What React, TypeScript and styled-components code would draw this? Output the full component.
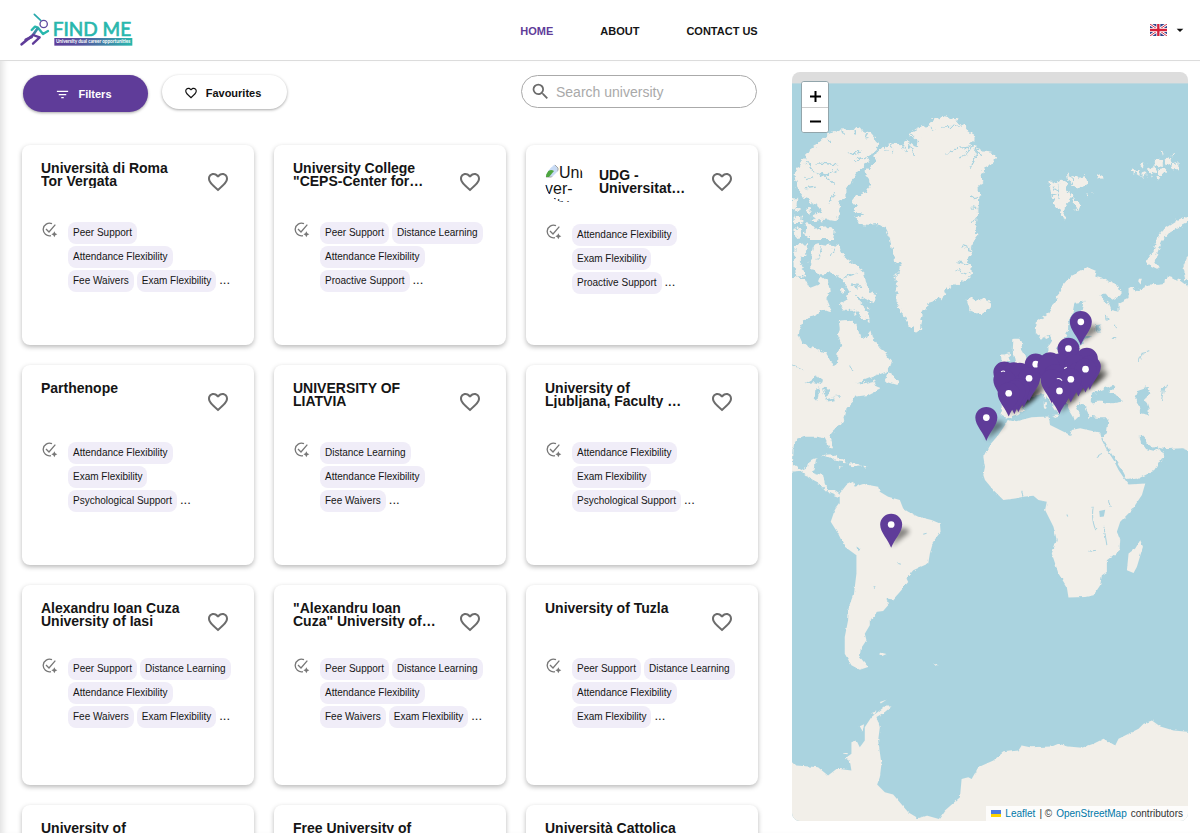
import React from 'react';
import styled, { createGlobalStyle } from 'styled-components';
import { MdFavoriteBorder, MdFilterList, MdSearch, MdArrowDropDown } from 'react-icons/md';

const purple = '#5f3c99';

const GlobalStyle = createGlobalStyle`
  * { box-sizing: border-box; }
  body {
    margin: 0;
    background: #fff;
    color: #151515;
    font-family: "Liberation Sans", Arial, sans-serif;
  }
  button, input { font-family: inherit; }
`;

const Page = styled.div`
  display: flex;
  flex-direction: column;
  height: 100vh;
`;

const Header = styled.header`
  display: grid;
  grid-template-columns: 1fr auto 1fr;
  align-items: center;
  height: 61px;
  flex-shrink: 0;
  padding: 0 12px 0 20px;
  border-bottom: 1px solid #dcdcdc;
`;

const LogoLink = styled.a`
  display: flex;
  width: 114px;
`;

const Nav = styled.nav`
  display: flex;
  gap: 47px;
  padding: 2px 0 0 70px;
`;

const NavLink = styled.a<{ $active?: boolean }>`
  font-size: 11px;
  font-weight: 700;
  line-height: 16px;
  text-decoration: none;
  color: ${(p) => (p.$active ? purple : '#151515')};
`;

const LanguageButton = styled.button`
  display: flex;
  align-items: center;
  justify-self: end;
  gap: 5px;
  padding: 0;
  border: 0;
  background: none;
  color: #111;
`;

const Main = styled.main`
  display: grid;
  grid-template-columns: minmax(0, 31fr) minmax(0, 17fr);
  flex: 1;
  min-height: 0;
  box-shadow: inset 7px 0 6px -4px rgba(0, 0, 0, 0.12);
`;

const Listing = styled.section`
  min-height: 0;
  overflow-y: auto;
  scrollbar-width: none;
  padding: 14px 17px 20px 22px;
`;

const Toolbar = styled.div`
  display: flex;
  align-items: flex-start;
  gap: 14px;
  height: 70px;
  padding: 0 1px;
`;

const PillButton = styled.button<{ $primary?: boolean }>`
  display: flex;
  align-items: center;
  justify-content: center;
  gap: 8px;
  width: 125px;
  height: ${(p) => (p.$primary ? 37 : 34)}px;
  padding: 1px 4px 0 0;
  border: 0;
  border-radius: 19px;
  font-size: 11px;
  font-weight: 700;
  color: ${(p) => (p.$primary ? '#fff' : '#111')};
  background: ${(p) => (p.$primary ? purple : '#fff')};
  box-shadow: 0 1px 3px rgba(0, 0, 0, 0.35);
`;

const SearchField = styled.label`
  display: flex;
  align-items: center;
  gap: 5px;
  width: 236px;
  height: 33px;
  margin-left: auto;
  padding: 0 8px;
  border: 1px solid #aaa;
  border-radius: 17px;
  color: #6b6b6b;
  svg { flex-shrink: 0; }
`;

const SearchInput = styled.input`
  flex: 1;
  min-width: 0;
  padding: 0;
  border: 0;
  outline: 0;
  background: none;
  font-size: 14px;
  color: #222;
  &::placeholder { color: #a9a9a9; opacity: 1; }
`;

const CardGrid = styled.div`
  display: grid;
  grid-template-columns: repeat(3, minmax(0, 1fr));
  gap: 20px;
`;

const Card = styled.article`
  height: 200px;
  padding: 17px 19px;
  border-radius: 8px;
  background: #fff;
  box-shadow: 0 2px 5px rgba(0, 0, 0, 0.28);
`;

const CardHead = styled.div<{ $centered?: boolean }>`
  display: flex;
  align-items: ${(p) => (p.$centered ? 'center' : 'flex-start')};
  height: 40px;
`;

const CardTitle = styled.h2`
  flex: 1;
  height: 26px;
  margin: 0;
  overflow: hidden;
  font-size: 14px;
  font-weight: 700;
  line-height: 13px;
  white-space: pre;
`;

const MissingImage = styled.span`
  flex-shrink: 0;
  width: 40px;
  height: 40px;
  margin-right: 14px;
  padding-top: 1px;
  overflow: hidden;
  border-radius: 50%;
  font-size: 16px;
  line-height: 16px;
  white-space: pre;
`;

const HeartButton = styled.button`
  display: flex;
  align-self: center;
  flex-shrink: 0;
  margin-right: 5px;
  padding: 0;
  border: 0;
  background: none;
  color: #6c6c6c;
`;

const Supports = styled.div<{ $gap: number }>`
  display: flex;
  gap: 10px;
  margin-top: ${(p) => p.$gap}px;
  svg { flex-shrink: 0; }
`;

const Chips = styled.ul`
  display: flex;
  flex-wrap: wrap;
  gap: 2px 3px;
  margin: 0;
  padding: 0;
  list-style: none;
`;

const Chip = styled.li`
  height: 22px;
  padding: 0 5px;
  border-radius: 8px;
  background: #f0edf8;
  font-size: 10px;
  line-height: 21px;
  white-space: nowrap;
`;

const More = styled.li`
  font-size: 13px;
  line-height: 20px;
`;

const MapColumn = styled.aside`
  min-height: 0;
  padding: 11px 12px 12px 17px;
`;

const MapFrame = styled.div`
  position: relative;
  height: 100%;
  overflow: hidden;
  border-radius: 8px;
  background: #ddd;
`;

const MapCanvas = styled.svg`
  display: block;
  width: 100%;
  height: 100%;
`;

const ZoomControl = styled.div`
  position: absolute;
  top: 9px;
  left: 9px;
  display: flex;
  flex-direction: column;
  border: 1px solid #92a5ab;
  border-radius: 3px;
  background: #fff;
  overflow: hidden;
`;

const ZoomButton = styled.button`
  display: flex;
  align-items: center;
  justify-content: center;
  width: 26px;
  height: 25px;
  padding: 3px 0 0;
  border: 0;
  background: #fff;
  & + & { border-top: 1px solid #ccc; }
`;

const Attribution = styled.div`
  position: absolute;
  right: 0;
  bottom: 0;
  display: flex;
  align-items: center;
  gap: 4px;
  height: 15px;
  padding: 0 5px;
  background: rgba(255, 255, 255, 0.8);
  font-size: 10px;
  color: #333;
  a { color: #0078a8; text-decoration: none; }
`;

const Logo = () => (
  <svg width="114" height="34" viewBox="59 40 342 102" role="img" aria-label="Find Me">
    <defs>
      <linearGradient id="bar" x1="0" x2="1">
        <stop offset="0" stopColor="#5f3c99" />
        <stop offset="0.35" stopColor="#55559f" />
        <stop offset="1" stopColor="#28b7ad" />
      </linearGradient>
      <linearGradient id="body" gradientUnits="userSpaceOnUse" x1="108" y1="75" x2="92" y2="122">
        <stop offset="0" stopColor="#28b7ad" />
        <stop offset="1" stopColor="#5f3c99" />
      </linearGradient>
    </defs>
    <g fill="none" strokeLinecap="round" strokeLinejoin="round">
      <path d="M102 44 L121 62" stroke="#28a9ac" strokeWidth="5" />
      <circle cx="130" cy="73" r="11" stroke="#5f4ba0" strokeWidth="4" />
      <path d="M94 91 L104 81 L113 84 L128 103 L143 94" stroke="#28b7ad" strokeWidth="7" />
      <path d="M112 86 L98 106 L64 134" stroke="url(#body)" strokeWidth="8" />
      <path d="M98 106 L118 113 L98 132" stroke="#5f3c99" strokeWidth="7" />
      <path d="M76 120 L94 112" stroke="#5f3c99" strokeWidth="8" />
    </g>
    <text x="157" y="109" fontFamily="Lato, sans-serif" fontSize="57" fill="#28b7ad" stroke="#28b7ad" strokeWidth="2">FIND ME</text>
    <rect x="162" y="115" width="234" height="23" fill="url(#bar)" />
    <text x="167" y="131" fontFamily="Lato, sans-serif" fontSize="14" fontWeight="700" fill="#fff">
      University dual career opportunities
    </text>
  </svg>
);

const UkFlag = () => (
  <svg width="17" height="12" viewBox="0 0 51 36" aria-hidden="true">
    <rect width="51" height="36" fill="#34458c" />
    <path d="M0 0 L51 36 M51 0 L0 36" stroke="#fff" strokeWidth="8" />
    <path d="M0 0 L51 36 M51 0 L0 36" stroke="#d3344b" strokeWidth="3" />
    <path d="M25 0 V36 M0 18 H51" stroke="#fff" strokeWidth="12" />
    <path d="M25 0 V36 M0 18 H51" stroke="#d5203b" strokeWidth="7" />
  </svg>
);

const TaskIcon = () => (
  <svg width="17" height="17" viewBox="0 0 51 51" fill="none" stroke="#777" strokeWidth="4" aria-hidden="true">
    <path d="M33 5 A19 19 0 1 0 30 41" />
    <path d="M15 21 L24 30 L43 8" />
    <path d="M40 28 L43 34 L49 37 L43 40 L40 46 L37 40 L31 37 L37 34 Z" fill="#777" stroke="none" />
  </svg>
);

const BrokenImageIcon = () => (
  <svg width="14" height="15" viewBox="0 0 14 15" aria-hidden="true">
    <path d="M1 1 H9 L13 5 V14 H1 Z" fill="#c7daf4" stroke="#a5a5a5" />
    <path d="M1 14 V10 Q5 5 9 8 L4 14 Z" fill="#4ea63f" />
    <path d="M6 15 L14 7 V15 Z" fill="#fff" />
  </svg>
);

/* Map geometry is drawn at three units per pixel. */
const NORTH = [
  // Greenland
  'M275,262 L300,243 328,238 350,240 365,225 385,240 400,245 395,225 370,210 400,190 430,180 445,165 480,158 520,165 533,180 545,195 570,215 572,225 555,240 575,250 600,262 620,265 632,282 620,300 600,310 590,330 592,350 580,360 583,400 580,440 572,480 580,510 565,530 560,560 545,580 555,600 558,628 540,645 510,660 485,670 478,690 460,705 430,715 415,740 408,770 405,800 390,795 370,775 350,740 335,710 335,680 340,655 325,640 345,620 350,600 325,590 320,550 315,520 300,490 280,478 250,480 225,478 215,455 240,450 205,440 215,425 200,410 215,390 245,380 258,360 255,345 238,335 245,315 262,300 270,290Z',
  // Ellesmere and neighbouring islands
  'M65,265 L100,240 125,215 165,195 215,193 255,205 278,230 275,250 258,270 240,300 218,325 200,350 185,375 185,400 160,410 165,440 155,470 125,465 80,470 85,455 110,440 105,425 80,415 70,400 55,395 35,370 30,330 45,300 50,285 65,285Z',
  'M22,395 L40,410 38,425 22,430Z M30,432 L48,430 46,438 32,440Z M30,452 L50,455 50,475 30,475Z M66,430 L78,432 74,445 66,442Z M30,495 L48,490 50,515 32,518Z M65,475 L80,480 90,492 140,487 150,500 145,523 70,523 60,500Z',
  'M85,545 L110,540 165,548 170,565 185,580 235,620 240,650 255,680 277,690 270,715 250,710 235,700 215,690 225,710 250,735 258,768 240,765 220,750 200,735 180,735 165,715 190,700 195,680 165,640 135,620 115,632 90,620 75,600Z',
  'M30,540 L70,535 68,560 45,585 60,630 35,640 28,590Z M168,668 L180,668 182,682 170,684Z',
  'M545,705 L560,700 585,710 605,698 618,715 610,735 575,748 555,738 550,722Z',
  // Svalbard, Franz Josef Land
  'M793,350 L815,355 825,345 845,350 840,370 860,395 845,415 835,462 825,450 812,415 800,400Z M845,330 L870,340 900,335 907,355 880,375 850,350Z M865,395 L885,420 880,440 867,430Z M938,338 L950,332 955,340 942,344Z M900,392 L908,394 904,398Z M918,384 L928,386 922,391Z',
  'M1038,320 L1060,314 1060,334Z M1064,300 L1080,294 1076,312Z M1066,330 L1080,325 1080,344Z M1088,312 L1108,304 1112,325 1098,336Z M1102,290 L1125,282 1134,300 1112,308Z M1118,312 L1140,308 1138,330 1118,332Z M1138,285 L1155,276 1160,296 1144,302Z M1162,296 L1180,290 1178,314 1162,314Z M1126,262 L1136,264 1130,274Z M1156,268 L1170,268 1162,278Z M1110,335 L1125,334 1118,348Z',
];

const MIDDLE = [
  // North and Central America
  'M22,640 L60,640 75,670 100,660 110,635 130,650 135,680 125,700 140,735 135,745 110,735 95,750 70,755 55,770 45,790 42,810 55,838 90,850 120,862 135,885 147,908 157,895 158,865 170,840 160,815 165,790 162,768 195,765 215,780 225,815 245,820 260,800 265,820 285,850 300,862 320,890 315,910 300,922 260,938 215,955 240,955 268,948 275,965 290,970 250,990 215,995 205,1010 185,1030 180,1060 165,1080 140,1105 135,1120 145,1150 135,1150 120,1120 95,1115 60,1115 35,1125 24,1145 22,1195 50,1215 70,1205 75,1185 95,1180 90,1210 85,1220 115,1230 120,1255 130,1275 150,1275 165,1285 160,1295 135,1285 110,1260 90,1250 60,1230 45,1218 0,1222 0,640Z',
  'M312,918 L318,932 340,948 335,960 300,950 305,932Z',
  'M115,1170 L140,1168 165,1180 190,1192 165,1190 140,1180Z M193,1192 L220,1194 232,1204 200,1207Z M158,1202 L175,1205 165,1209Z M235,1202 L248,1204 240,1208Z',
  // Europe and western Asia
  'M905,607 L935,620 930,635 960,645 1000,665 1008,690 985,705 960,690 945,690 965,710 975,735 1000,740 1000,715 1030,700 1030,670 1045,665 1050,680 1090,660 1140,655 1145,635 1180,645 1208,665 1230,680 1230,1165 1190,1150 1150,1152 1120,1145 1138,1172 1110,1215 1060,1240 1025,1245 1015,1225 990,1185 960,1135 950,1115 965,1105 970,1060 945,1060 910,1055 905,1040 895,1020 885,1015 872,1025 885,1050 870,1065 855,1040 840,1010 830,1005 835,1025 820,1045 800,1015 780,985 760,990 730,995 715,1035 700,1050 670,1060 650,1055 650,1005 660,990 700,995 710,975 695,965 720,955 745,935 770,910 790,880 790,845 800,830 795,812 770,825 752,800 755,770 790,745 815,700 830,665 860,630Z',
  'M685,822 L702,822 714,835 707,850 722,875 727,900 700,912 690,890 683,860Z M648,870 L675,865 672,890 650,893Z M776,985 L784,985 782,1005 776,1000Z M776,1012 L786,1012 783,1032 776,1030Z M798,1050 L825,1048 820,1060Z',
  // Novaya Zemlya
  'M1205,455 L1180,465 1140,490 1115,520 1105,560 1090,580 1085,600 1115,615 1120,608 1108,590 1118,560 1130,530 1155,500 1205,475Z M1230,560 L1208,572 1192,610 1200,645 1230,660Z M1058,645 L1070,645 1066,656Z',
];

const SOUTH = [
  // South America
  'M165,1285 L185,1260 205,1250 210,1265 235,1257 280,1265 285,1280 310,1295 345,1305 355,1330 370,1340 400,1355 440,1365 465,1375 467,1400 445,1430 435,1465 430,1495 385,1515 365,1540 370,1550 345,1580 325,1603 305,1600 310,1620 295,1637 272,1640 270,1655 255,1663 255,1680 240,1705 245,1725 228,1750 225,1775 250,1805 225,1813 200,1800 180,1765 180,1715 190,1665 192,1625 205,1590 207,1590 215,1525 215,1470 180,1445 160,1405 138,1370 150,1335 165,1315Z',
  'M282,1766 L290,1762 305,1766 292,1772Z M445,1794 L455,1798 460,1806 452,1801Z',
  // Africa and Madagascar
  'M668,1065 L690,1070 740,1057 790,1055 795,1080 825,1095 855,1110 860,1095 885,1090 945,1103 950,1125 965,1155 985,1185 1000,1215 1020,1245 1030,1258 1080,1255 1070,1290 1040,1335 1005,1370 995,1400 1005,1425 1003,1455 965,1485 965,1520 950,1530 945,1560 925,1590 900,1595 850,1597 845,1565 820,1525 800,1465 815,1425 805,1385 780,1335 785,1310 760,1305 745,1292 715,1295 690,1300 655,1305 625,1275 600,1245 595,1230 600,1205 595,1175 610,1145 640,1110 660,1080Z',
  'M1065,1425 L1073,1445 1055,1505 1045,1523 1025,1515 1030,1465 1050,1450Z',
  // Antarctica
  'M0,2087 L22,2087 35,2100 100,2105 130,2130 155,2110 165,2110 200,2115 195,2085 180,2080 200,2065 200,2030 215,2025 225,2045 240,2025 240,1985 260,1955 300,1923 320,1923 300,1940 275,1955 285,1985 280,2025 290,2095 285,2135 277,2157 300,2180 325,2187 370,2240 400,2258 425,2250 462,2260 480,2235 525,2195 530,2140 550,2135 560,2140 580,2105 625,2085 655,2060 700,2055 710,2040 735,2045 800,2043 820,2035 850,2043 890,2047 925,2035 955,2020 985,2037 990,2040 1000,2020 1060,1990 1075,1975 1100,1965 1125,1983 1165,1995 1230,2001 1230,2300 0,2300Z',
  'M172,2064 L190,2060 188,2066Z M225,1982 L238,1976 234,1998Z M262,1942 L275,1938 268,1948Z M285,1910 L305,1903 288,1914Z',
];

const WATER = [
  'M868,714 L895,711 890,735 872,755 866,785 890,815 925,812 900,822 880,850 870,868 825,868 812,850 835,830 848,800 850,770 862,745Z',
  'M920,985 L945,975 985,960 990,965 970,980 1000,995 1010,1010 980,1015 945,1010 920,1013Z',
  'M1060,975 L1090,965 1095,990 1080,1000 1090,1030 1090,1050 1065,1045 1060,1020 1050,1000Z',
  'M1060,1115 L1075,1115 1085,1135 1105,1150 1115,1140 1122,1152 1105,1160 1085,1155 1065,1130Z',
  'M62,955 L95,935 115,942 112,958 88,952Z M92,970 L104,968 98,1008 90,1000Z M112,968 L135,972 135,990 122,1000Z M122,1003 L148,998 150,1006 125,1010Z M145,993 L172,990 170,996Z',
  'M930,778 L945,776 946,800 932,800Z M962,750 L972,762 964,770Z',
];

const SOUTH_LAKES = 'M942,1338 L960,1334 956,1354 944,1356Z M215,1444 L224,1450 218,1455Z M266,1562 L273,1564 268,1568Z';

const INLETS =
  'M485,270 Q500,250 530,250 T572,240 M520,280 Q550,270 555,250 M555,310 L568,278 578,255 M380,208 L402,232 M345,235 L365,262 M374,238 L392,275 M320,240 L328,262 M298,246 L304,262 M468,188 L530,184 M430,182 L448,198 M570,250 L590,275 M65,290 Q80,325 110,330 T165,310 M110,325 L150,357 M195,270 L225,260 M95,295 L155,300 M210,290 L250,275 M130,220 L138,236 M170,198 L176,214 M205,196 L208,210 M250,206 L240,222 M65,345 L85,340 M60,370 L90,365 M130,420 L150,380 M110,545 L100,585 M150,552 L140,575 M175,640 L215,625 M195,660 L235,670 M560,400 L582,395 M560,430 L580,432 M555,470 L575,465 M530,545 L560,555 M515,590 L550,600 M515,618 L550,626 M804,365 L825,385 M820,360 L825,400 M800,395 L815,390 M860,340 L862,355';

const RIVERS = 'M1062,885 L1072,862 1095,858 M1128,1010 L1135,970 1150,960 M980,820 L990,822 M990,780 L994,790 M240,820 L222,790 M195,900 L205,920 M25,900 L60,915';

const SOUTH_RIVERS = 'M924,1325 Q918,1365 932,1395 M956,1385 L965,1440 M970,1305 L975,1325 M910,1458 L930,1455 M935,1175 L950,1165 M710,1280 L714,1292 M845,1348 L848,1354 M415,1407 L425,1404 M338,1495 L345,1497';

type Pin = { x: number; y: number; dot?: boolean };

/* Later pins lie on top of earlier ones. */
const PINS: Pin[] = [
  { x: 887, y: 771, dot: true },
  { x: 850, y: 851, dot: true },
  { x: 905, y: 881 },
  { x: 752, y: 898, dot: true },
  { x: 795, y: 894 },
  { x: 822, y: 898 },
  { x: 790, y: 902 },
  { x: 870, y: 900 },
  { x: 914, y: 905 },
  { x: 880, y: 925 },
  { x: 901, y: 913, dot: true },
  { x: 658, y: 922 },
  { x: 686, y: 924 },
  { x: 704, y: 926 },
  { x: 810, y: 930 },
  { x: 658, y: 945 },
  { x: 716, y: 958 },
  { x: 732, y: 940, dot: true },
  { x: 840, y: 950 },
  { x: 857, y: 943, dot: true },
  { x: 800, y: 945 },
  { x: 700, y: 972 },
  { x: 688, y: 978 },
  { x: 823, y: 978, dot: true },
  { x: 671, y: 985, dot: true },
  { x: 604, y: 1058, dot: true },
  { x: 319, y: 1378, dot: true },
];

const Coast = ({ id, scale }: { id: string; scale: number }) => (
  <filter id={id} filterUnits="userSpaceOnUse" x="0" y="0" width="1230" height="2300">
    <feTurbulence type="fractalNoise" baseFrequency="0.06" numOctaves="3" seed="4" />
    <feDisplacementMap in="SourceGraphic" scale={scale} xChannelSelector="R" yChannelSelector="G" />
  </filter>
);

const WorldMap = () => (
  <MapCanvas viewBox="22 21 1186 2247" preserveAspectRatio="xMidYMid slice" role="img" aria-label="Map of universities">
    <defs>
      <Coast id="coast-north" scale={24} />
      <Coast id="coast-middle" scale={16} />
      <Coast id="coast-south" scale={8} />
      <filter id="soft" x="-50%" y="-50%" width="200%" height="200%">
        <feGaussianBlur stdDeviation="8" />
      </filter>
    </defs>
    <rect x="22" y="57" width="1186" height="2211" fill="#aad3df" />
    <g filter="url(#coast-north)">
      <path d={NORTH.join(' ')} fill="#f2efe9" />
      <path d={INLETS} fill="none" stroke="#aad3df" strokeWidth="4" />
    </g>
    <g filter="url(#coast-middle)">
      <path d={MIDDLE.join(' ')} fill="#f2efe9" />
      <path d={WATER.join(' ')} fill="#aad3df" />
      <path d={RIVERS} fill="none" stroke="#aad3df" strokeWidth="3" />
    </g>
    <g filter="url(#coast-south)">
      <path d={SOUTH.join(' ')} fill="#f2efe9" />
      <path d={SOUTH_LAKES} fill="#aad3df" />
      <path d={SOUTH_RIVERS} fill="none" stroke="#aad3df" strokeWidth="3" />
    </g>
    {PINS.map((p) => (
      <path
        key={`shadow-${p.x}-${p.y}`}
        d={`M${p.x},${p.y + 66} L${p.x + 18},${p.y + 14} Q${p.x + 52},${p.y + 4} ${p.x + 54},${p.y + 24} Z`}
        fill="#000"
        opacity="0.45"
        filter="url(#soft)"
      />
    ))}
    {PINS.map((p) => (
      <g key={`pin-${p.x}-${p.y}`}>
        <path
          d={`M${p.x},${p.y + 70} C${p.x - 8},${p.y + 46} ${p.x - 33},${p.y + 24} ${p.x - 33},${p.y} A33,32 0 0 1 ${p.x + 33},${p.y} C${p.x + 33},${p.y + 24} ${p.x + 8},${p.y + 46} ${p.x},${p.y + 70} Z`}
          fill={purple}
        />
        {p.dot && <circle cx={p.x} cy={p.y} r="10" fill="#fff" />}
      </g>
    ))}
    <path d="M648,921 Q654,917 660,920 M815,942 Q824,939 831,947 M837,911 L845,907" stroke="#fff" strokeWidth="3" fill="none" />
  </MapCanvas>
);

type University = { title: string; supports: string[]; image?: boolean; gap: number };

const PEER = 'Peer Support';
const DISTANCE = 'Distance Learning';
const ATTENDANCE = 'Attendance Flexibility';
const EXAM = 'Exam Flexibility';
const FEE = 'Fee Waivers';
const PROACTIVE = 'Proactive Support';
const PSYCH = 'Psychological Support';

const UNIVERSITIES: University[] = [
  { title: 'Università di Roma\nTor Vergata', supports: [PEER, ATTENDANCE, FEE, EXAM], gap: 20 },
  { title: 'University College\n"CEPS-Center for…', supports: [PEER, DISTANCE, ATTENDANCE, PROACTIVE], gap: 20 },
  { title: 'UDG -\nUniversitat…', supports: [ATTENDANCE, EXAM, PROACTIVE], gap: 22, image: true },
  { title: 'Parthenope', supports: [ATTENDANCE, EXAM, PSYCH], gap: 20 },
  { title: 'UNIVERSITY OF\nLIATVIA', supports: [DISTANCE, ATTENDANCE, FEE], gap: 20 },
  { title: 'University of\nLjubljana, Faculty …', supports: [ATTENDANCE, EXAM, PSYCH], gap: 20 },
  { title: 'Alexandru Ioan Cuza\nUniversity of Iasi', supports: [PEER, DISTANCE, ATTENDANCE, FEE, EXAM], gap: 16 },
  { title: '"Alexandru Ioan\nCuza" University of…', supports: [PEER, DISTANCE, ATTENDANCE, FEE, EXAM], gap: 16 },
  { title: 'University of Tuzla', supports: [PEER, DISTANCE, ATTENDANCE, EXAM], gap: 16 },
  { title: 'University of', supports: [], gap: 20 },
  { title: 'Free University of', supports: [], gap: 20 },
  { title: 'Università Cattolica', supports: [], gap: 20 },
];

const UniversityCard = ({ item }: { item: University }) => (
  <Card>
    <CardHead $centered={item.image}>
      {item.image && (
        <MissingImage>
          <BrokenImageIcon />
          {'Uni\nver-\nsity'}
        </MissingImage>
      )}
      <CardTitle>{item.title}</CardTitle>
      <HeartButton type="button" aria-label="Add to favourites">
        <MdFavoriteBorder size={24} />
      </HeartButton>
    </CardHead>
    {item.supports.length > 0 && (
      <Supports $gap={item.gap}>
        <TaskIcon />
        <Chips>
          {item.supports.map((s) => (
            <Chip key={s}>{s}</Chip>
          ))}
          <More>...</More>
        </Chips>
      </Supports>
    )}
  </Card>
);

export default function App() {
  return (
    <Page>
      <GlobalStyle />
      <Header>
        <LogoLink href="#home">
          <Logo />
        </LogoLink>
        <Nav>
          <NavLink href="#home" $active>HOME</NavLink>
          <NavLink href="#about">ABOUT</NavLink>
          <NavLink href="#contact">CONTACT US</NavLink>
        </Nav>
        <LanguageButton type="button" aria-label="Language" aria-haspopup="listbox">
          <UkFlag />
          <MdArrowDropDown size={16} />
        </LanguageButton>
      </Header>
      <Main>
        <Listing>
          <Toolbar>
            <PillButton type="button" $primary>
              <MdFilterList size={15} />
              Filters
            </PillButton>
            <PillButton type="button">
              <MdFavoriteBorder size={14} />
              Favourites
            </PillButton>
            <SearchField>
              <MdSearch size={21} />
              <SearchInput type="text" placeholder="Search university" aria-label="Search university" />
            </SearchField>
          </Toolbar>
          <CardGrid>
            {UNIVERSITIES.map((u) => (
              <UniversityCard key={u.title} item={u} />
            ))}
          </CardGrid>
        </Listing>
        <MapColumn>
          <MapFrame>
            <WorldMap />
            <ZoomControl>
              <ZoomButton type="button" aria-label="Zoom in">
                <svg width="11" height="11" viewBox="0 0 11 11"><path d="M5.5 0 V11 M0 5.5 H11" stroke="#000" strokeWidth="2" /></svg>
              </ZoomButton>
              <ZoomButton type="button" aria-label="Zoom out">
                <svg width="11" height="11" viewBox="0 0 11 11"><path d="M0 5.5 H11" stroke="#000" strokeWidth="2" /></svg>
              </ZoomButton>
            </ZoomControl>
            <Attribution>
              <svg width="10" height="7" viewBox="0 0 10 7" aria-hidden="true">
                <rect width="10" height="4" fill="#4c7be1" />
                <rect y="4" width="10" height="3" fill="#ffd500" />
              </svg>
              <a href="#leaflet">Leaflet</a>
              <span>| ©</span>
              <a href="#osm">OpenStreetMap</a>
              <span>contributors</span>
            </Attribution>
          </MapFrame>
        </MapColumn>
      </Main>
    </Page>
  );
}
